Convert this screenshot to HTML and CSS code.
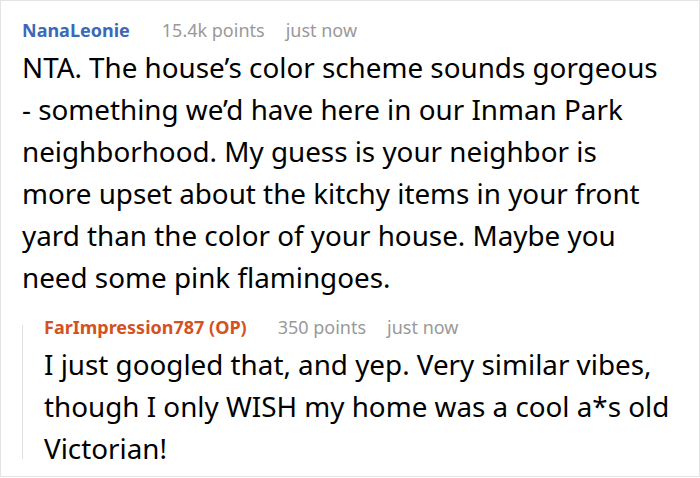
FILE: index.html
```html
<!DOCTYPE html>
<html>
<head>
<meta charset="utf-8">
<link rel="stylesheet" href="styles.css">
</head>
<body>
<div class="card">
  <div class="comment">
    <div class="meta">
      <span class="author">NanaLeonie</span>
      <span class="points">15.4k points</span>
      <span class="time">just now</span>
    </div>
    <p class="text main-text">NTA. The house’s color scheme sounds gorgeous - something we’d have here in our Inman Park neighborhood. My guess is your neighbor is more upset about the kitchy items in your front yard than the color of your house. Maybe you need some pink flamingoes.</p>
    <div class="reply">
      <div class="meta">
        <span class="author op">FarImpression787 (OP)</span>
        <span class="points">350 points</span>
        <span class="time">just now</span>
      </div>
      <p class="text reply-text">I just googled that, and yep. Very similar vibes, though I only WISH my home was a cool a*s old Victorian!</p>
    </div>
  </div>
</div>
</body>
</html>
```
FILE: styles.css
```css
html, body {
  margin: 0;
  padding: 0;
  background: #fff;
}
.card {
  width: 700px;
  height: 477px;
  box-sizing: border-box;
  border: 1px solid #e4e4e4;
  overflow: hidden;
  font-family: "Noto Sans", "Open Sans", sans-serif;
}
.comment {
  padding: 17px 15px 0 21px;
}
.meta {
  display: flex;
  align-items: baseline;
  font-size: 18px;
  line-height: 24px;
}
.author {
  font-weight: bold;
  color: #3b69b8;
  margin-right: 32px;
}
.author.op {
  color: #d4521f;
  margin-right: 31px;
}
.points {
  color: #999;
  margin-right: 21px;
}
.time {
  color: #999;
}
.text {
  margin: 0;
  font-size: 27.8px;
  line-height: 42px;
  color: #000;
}
.main-text {
  margin-top: 4px;
  margin-right: 21px;
}
.reply {
  position: relative;
  margin-top: 17px;
  padding-left: 22px;
}
.reply::before {
  content: "";
  position: absolute;
  left: 0;
  top: 10px;
  bottom: 10px;
  width: 1px;
  background: #e0e0e0;
}
.reply-text {
  margin-top: 4px;
}
```
